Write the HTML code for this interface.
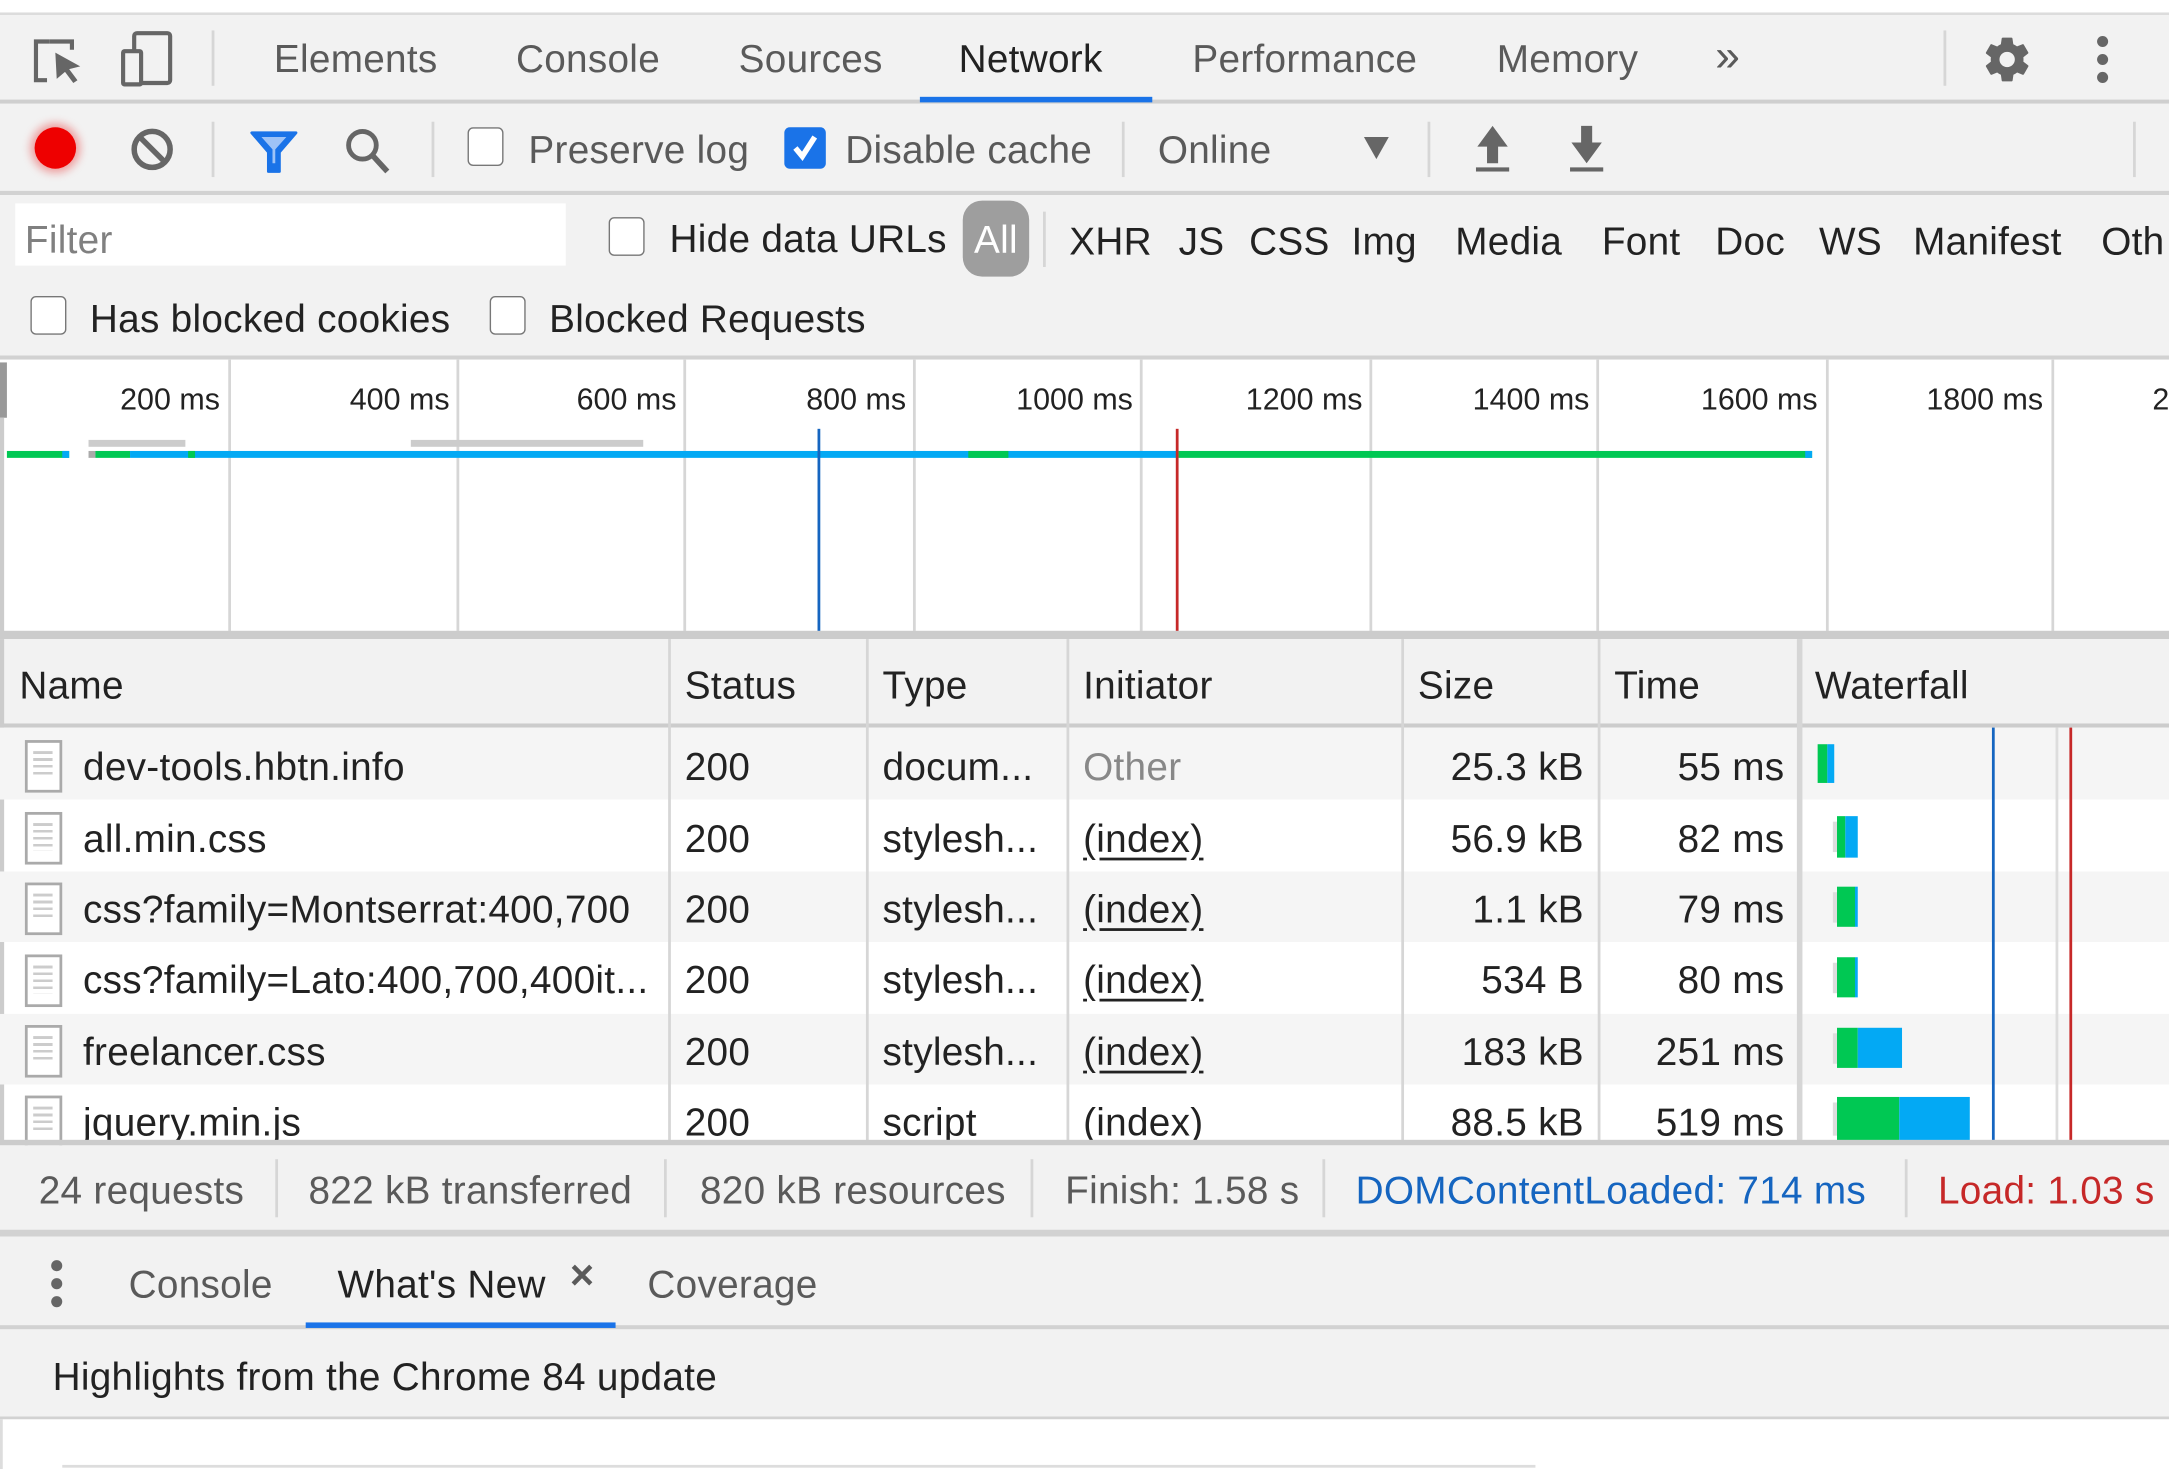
<!DOCTYPE html>
<html><head><meta charset="utf-8"><style>
html,body{margin:0;padding:0;width:2169px;height:1469px;overflow:hidden;background:#fff}
#w{position:absolute;left:0;top:0;width:1568px;height:1062px;transform:scale(1.38329);transform-origin:0 0;font-family:"Liberation Sans",sans-serif;font-size:28px;letter-spacing:0.2px;color:#222}
.a{position:absolute;white-space:nowrap}
.g{color:#5a5a5a}
.r{position:absolute;left:0;width:1568px}
.cb{position:absolute;width:26px;height:28px;border:1.5px solid #777;border-radius:4px;background:#fff;box-sizing:border-box}
.vl{position:absolute;width:2px;background:#d6d6d6}
.doc{position:absolute;left:18px;width:27px;height:38px;border:2px solid #aaa;box-sizing:border-box;background:#fff}
.doc:after{content:"";position:absolute;left:4px;top:6px;width:14px;height:20px;background:repeating-linear-gradient(#ccc 0 2px,transparent 2px 5px)}
.u{text-decoration:underline;text-underline-offset:4px}
</style></head><body><div id="w">
<div class="r" style="top:0;height:9px;background:#fff"></div>
<div class="r" style="top:9px;height:2px;background:#dcdcdc"></div>
<div class="r" style="top:11px;height:62px;background:#f2f2f2"></div>
<div class="r" style="top:72px;height:3px;background:#cfcfcf"></div>
<svg class="a" style="left:22px;top:26px" width="40" height="36" viewBox="0 0 40 36"><path d="M14 4H4V32H12" fill="none" stroke="#666" stroke-width="3"/><path d="M14 4H30V10" fill="none" stroke="#666" stroke-width="3"/><path d="M18 12L36 22L28 24L34 32L31 34L25 26L19 31Z" fill="#666"/></svg>
<svg class="a" style="left:86px;top:21px" width="42" height="44" viewBox="0 0 42 44"><rect x="11" y="3" width="26" height="36" rx="2" fill="none" stroke="#666" stroke-width="3"/><rect x="3" y="16" width="13" height="24" rx="1" fill="#f2f2f2" stroke="#666" stroke-width="3"/></svg>
<div class="vl" style="left:153px;top:22px;height:40px"></div>
<div class="a g" style="left:198px;top:27px">Elements</div>
<div class="a g" style="left:373px;top:27px">Console</div>
<div class="a g" style="left:534px;top:27px">Sources</div>
<div class="a" style="left:693px;top:27px;color:#222">Network</div>
<div class="a" style="left:665px;top:70px;width:168px;height:4px;background:#1a73e8"></div>
<div class="a g" style="left:862px;top:27px">Performance</div>
<div class="a g" style="left:1082px;top:27px">Memory</div>
<div class="a g" style="left:1240px;top:22px;font-size:32px">»</div>
<div class="vl" style="left:1405px;top:22px;height:40px"></div>
<svg class="a" style="left:1432px;top:24px" width="38" height="38" viewBox="0 0 24 24"><path fill="#666" d="M19.4 13c.04-.33.06-.66.06-1s-.02-.67-.06-1l2.1-1.65c.2-.15.24-.42.12-.64l-2-3.460c-.12-.22-.39-.3-.61-.22l-2.5 1c-.52-.4-1.080-.73-1.7-.98l-.38-2.65A.49.49 0 0 0 14 2h-4c-.25 0-.46.18-.49.42l-.38 2.65c-.61.25-1.17.59-1.69.98l-2.49-1c-.23-.09-.49 0-.61.22l-2 3.46c-.13.22-.07.49.12.64L4.57 11c-.04.33-.07.67-.07 1s.03.67.07 1l-2.11 1.65c-.19.15-.24.42-.12.64l2 3.46c.12.22.39.3.61.22l2.49-1c.52.4 1.08.73 1.69.98l.38 2.65c.03.24.24.42.49.42h4c.25 0 .46-.18.49-.42l.38-2.650c.61-.25 1.17-.59 1.69-.98l2.49 1c.23.09.49 0 .61-.22l2-3.46c.12-.22.07-.49-.12-.64L19.4 13zM12 15.5A3.5 3.5 0 1 1 12 8.5a3.5 3.5 0 0 1 0 7z"/></svg>
<svg class="a" style="left:1512px;top:24px" width="16" height="38"><circle cx="8" cy="6" r="4" fill="#666"/><circle cx="8" cy="19" r="4" fill="#666"/><circle cx="8" cy="32" r="4" fill="#666"/></svg>
<div class="r" style="top:75px;height:64px;background:#f2f2f2"></div>
<div class="r" style="top:138px;height:3px;background:#d2d2d2"></div>
<div class="a" style="left:25px;top:92px;width:30px;height:30px;border-radius:50%;background:#e00;box-shadow:0 0 6px 3px rgba(230,0,0,.35)"></div>
<svg class="a" style="left:93px;top:91px" width="34" height="34" viewBox="0 0 34 34"><circle cx="17" cy="17" r="13" fill="none" stroke="#666" stroke-width="4"/><path d="M8 8L26 26" stroke="#666" stroke-width="4"/></svg>
<div class="vl" style="left:153px;top:88px;height:40px"></div>
<svg class="a" style="left:180px;top:94px" width="36" height="32" viewBox="0 0 36 32"><path d="M2 2H34L22 16V30H14V16Z" fill="#1a73e8" stroke="#1a73e8" stroke-width="2" stroke-linejoin="round"/><path d="M9 5H27L19 14V24H17V14Z" fill="#9ec3f7"/></svg>
<svg class="a" style="left:248px;top:91px" width="36" height="36" viewBox="0 0 36 36"><circle cx="14" cy="14" r="10" fill="none" stroke="#666" stroke-width="3.5"/><path d="M21 21L32 33" stroke="#666" stroke-width="4"/></svg>
<div class="vl" style="left:312px;top:88px;height:40px"></div>
<div class="cb" style="left:338px;top:92px"></div>
<div class="a g" style="left:382px;top:93px">Preserve log</div>
<div class="a" style="left:567px;top:92px;width:30px;height:30px;background:#1a73e8;border-radius:4px"><svg width="30" height="30"><path d="M8 15L13 21L22 7" fill="none" stroke="#fff" stroke-width="4"/></svg></div>
<div class="a g" style="left:611px;top:93px">Disable cache</div>
<div class="vl" style="left:811px;top:88px;height:40px"></div>
<div class="a g" style="left:837px;top:93px">Online</div>
<svg class="a" style="left:985px;top:98px" width="20" height="18"><path d="M1 1H19L10 17Z" fill="#666"/></svg>
<div class="vl" style="left:1032px;top:88px;height:40px"></div>
<svg class="a" style="left:1064px;top:90px" width="30" height="36"><path d="M15 1L26 16H19V28H11V16H4Z" fill="#666"/><rect x="3" y="31" width="24" height="3" fill="#666"/></svg>
<svg class="a" style="left:1132px;top:90px" width="30" height="36"><path d="M15 28L26 13H19V1H11V13H4Z" fill="#666"/><rect x="3" y="31" width="24" height="3" fill="#666"/></svg>
<div class="vl" style="left:1542px;top:88px;height:40px"></div>
<div class="r" style="top:141px;height:117px;background:#f2f2f2"></div>
<div class="r" style="top:257px;height:3px;background:#d2d2d2"></div>
<div class="a" style="left:11px;top:147px;width:398px;height:45px;background:#fff"></div>
<div class="a" style="left:18px;top:158px;color:#808080">Filter</div>
<div class="cb" style="left:440px;top:157px"></div>
<div class="a" style="left:484px;top:157px">Hide data URLs</div>
<div class="a" style="left:696px;top:145px;width:48px;height:55px;border-radius:14px;background:#9e9e9e;color:#fff;text-align:center;line-height:58px">All</div>
<div class="vl" style="left:754px;top:153px;height:40px"></div>
<div class="a" style="left:773px;top:159px">XHR</div>
<div class="a" style="left:852px;top:159px">JS</div>
<div class="a" style="left:903px;top:159px">CSS</div>
<div class="a" style="left:977px;top:159px">Img</div>
<div class="a" style="left:1052px;top:159px">Media</div>
<div class="a" style="left:1158px;top:159px">Font</div>
<div class="a" style="left:1240px;top:159px">Doc</div>
<div class="a" style="left:1315px;top:159px">WS</div>
<div class="a" style="left:1383px;top:159px">Manifest</div>
<div class="a" style="left:1519px;top:159px">Oth</div>
<div class="cb" style="left:22px;top:214px"></div>
<div class="a" style="left:65px;top:215px">Has blocked cookies</div>
<div class="cb" style="left:354px;top:214px"></div>
<div class="a" style="left:397px;top:215px">Blocked Requests</div>
<div class="r" style="top:260px;height:197px;background:#fff"></div>
<div class="a" style="left:0;top:262px;width:5px;height:40px;background:#999"></div>
<div class="a" style="left:0;top:302px;width:3px;height:155px;background:#ccc"></div>
<div class="vl" style="left:165px;top:260px;height:197px"></div>
<div class="vl" style="left:330px;top:260px;height:197px"></div>
<div class="vl" style="left:494px;top:260px;height:197px"></div>
<div class="vl" style="left:660px;top:260px;height:197px"></div>
<div class="vl" style="left:824px;top:260px;height:197px"></div>
<div class="vl" style="left:990px;top:260px;height:197px"></div>
<div class="vl" style="left:1154px;top:260px;height:197px"></div>
<div class="vl" style="left:1320px;top:260px;height:197px"></div>
<div class="vl" style="left:1483px;top:260px;height:197px"></div>
<div style="font-size:22px;letter-spacing:0">
<div class="a" style="right:1409px;top:276px">200 ms</div>
<div class="a" style="right:1243px;top:276px">400 ms</div>
<div class="a" style="right:1079px;top:276px">600 ms</div>
<div class="a" style="right:913px;top:276px">800 ms</div>
<div class="a" style="right:749px;top:276px">1000 ms</div>
<div class="a" style="right:583px;top:276px">1200 ms</div>
<div class="a" style="right:419px;top:276px">1400 ms</div>
<div class="a" style="right:254px;top:276px">1600 ms</div>
<div class="a" style="right:91px;top:276px">1800 ms</div>
<div class="a" style="left:1556px;top:276px">2</div>
</div>
<div class="a" style="left:64px;top:318px;width:70px;height:5px;background:#ccc"></div>
<div class="a" style="left:297px;top:318px;width:168px;height:5px;background:#ccc"></div>
<div class="a" style="left:5px;top:326px;width:45px;height:5px;background:#00c853"></div>
<div class="a" style="left:45px;top:326px;width:5px;height:5px;background:#03a9f4"></div>
<div class="a" style="left:64px;top:326px;width:5px;height:5px;background:#aaa"></div>
<div class="a" style="left:69px;top:326px;width:25px;height:5px;background:#00c853"></div>
<div class="a" style="left:94px;top:326px;width:758px;height:5px;background:#03a9f4"></div>
<div class="a" style="left:136px;top:326px;width:5px;height:5px;background:#00c853"></div>
<div class="a" style="left:700px;top:326px;width:29px;height:5px;background:#00c853"></div>
<div class="a" style="left:852px;top:326px;width:458px;height:5px;background:#00c853"></div>
<div class="a" style="left:1305px;top:326px;width:5px;height:5px;background:#03a9f4"></div>
<div class="a" style="left:591px;top:310px;width:2px;height:147px;background:#1565c0"></div>
<div class="a" style="left:850px;top:310px;width:2px;height:147px;background:#c62828"></div>
<div class="r" style="top:456px;height:6px;background:#ccc"></div>
<div class="r" style="top:462px;height:62px;background:#f2f2f2"></div>
<div class="r" style="top:523px;height:3px;background:#ccc"></div>
<div class="a" style="left:0;top:462px;width:3px;height:363px;background:#ccc"></div>
<div class="a" style="left:14px;top:480px">Name</div>
<div class="a" style="left:495px;top:480px">Status</div>
<div class="a" style="left:638px;top:480px">Type</div>
<div class="a" style="left:783px;top:480px">Initiator</div>
<div class="a" style="left:1025px;top:480px">Size</div>
<div class="a" style="left:1167px;top:480px">Time</div>
<div class="a" style="left:1312px;top:480px">Waterfall</div>
<div class="r" style="top:526px;height:52px;background:#f5f5f5"></div>
<div class="r" style="top:630px;height:51px;background:#f5f5f5"></div>
<div class="r" style="top:733px;height:51px;background:#f5f5f5"></div>
<div class="vl" style="left:483px;top:462px;height:363px"></div>
<div class="vl" style="left:626px;top:462px;height:363px"></div>
<div class="vl" style="left:771px;top:462px;height:363px"></div>
<div class="vl" style="left:1013px;top:462px;height:363px"></div>
<div class="vl" style="left:1155px;top:462px;height:363px"></div>
<div class="a" style="left:1299px;top:462px;width:4px;height:363px;background:#d6d6d6"></div>
<div class="doc" style="top:535px"></div><div class="doc" style="top:587px"></div><div class="doc" style="top:638px"></div><div class="doc" style="top:690px"></div><div class="doc" style="top:741px"></div><div class="doc" style="top:792px"></div>
<div class="a" style="left:60px;top:539px">dev-tools.hbtn.info</div>
<div class="a" style="left:60px;top:591px">all.min.css</div>
<div class="a" style="left:60px;top:642px">css?family=Montserrat:400,700</div>
<div class="a" style="left:60px;top:693px">css?family=Lato:400,700,400it...</div>
<div class="a" style="left:60px;top:745px">freelancer.css</div>
<div class="a" style="left:60px;top:796px">jquery.min.js</div>
<div class="a" style="left:495px;top:539px">200</div><div class="a" style="left:495px;top:591px">200</div><div class="a" style="left:495px;top:642px">200</div><div class="a" style="left:495px;top:693px">200</div><div class="a" style="left:495px;top:745px">200</div><div class="a" style="left:495px;top:796px">200</div>
<div class="a" style="left:638px;top:539px">docum...</div><div class="a" style="left:638px;top:591px">stylesh...</div><div class="a" style="left:638px;top:642px">stylesh...</div><div class="a" style="left:638px;top:693px">stylesh...</div><div class="a" style="left:638px;top:745px">stylesh...</div><div class="a" style="left:638px;top:796px">script</div>
<div class="a" style="left:783px;top:539px;color:#888">Other</div><div class="a u" style="left:783px;top:591px">(index)</div><div class="a u" style="left:783px;top:642px">(index)</div><div class="a u" style="left:783px;top:693px">(index)</div><div class="a u" style="left:783px;top:745px">(index)</div><div class="a u" style="left:783px;top:796px">(index)</div>
<div class="a" style="right:423px;top:539px">25.3 kB</div><div class="a" style="right:423px;top:591px">56.9 kB</div><div class="a" style="right:423px;top:642px">1.1 kB</div><div class="a" style="right:423px;top:693px">534 B</div><div class="a" style="right:423px;top:745px">183 kB</div><div class="a" style="right:423px;top:796px">88.5 kB</div>
<div class="a" style="right:278px;top:539px">55 ms</div><div class="a" style="right:278px;top:591px">82 ms</div><div class="a" style="right:278px;top:642px">79 ms</div><div class="a" style="right:278px;top:693px">80 ms</div><div class="a" style="right:278px;top:745px">251 ms</div><div class="a" style="right:278px;top:796px">519 ms</div>
<div class="a" style="left:1314px;top:538px;width:7px;height:28px;background:#00c853"></div><div class="a" style="left:1321px;top:538px;width:5px;height:28px;background:#03a9f4"></div>
<div class="a" style="left:1325px;top:594px;width:3px;height:22px;background:#ddd"></div><div class="a" style="left:1328px;top:590px;width:6px;height:30px;background:#00c853"></div><div class="a" style="left:1334px;top:590px;width:9px;height:30px;background:#03a9f4"></div>
<div class="a" style="left:1325px;top:645px;width:3px;height:22px;background:#ddd"></div><div class="a" style="left:1328px;top:641px;width:13px;height:29px;background:#00c853"></div><div class="a" style="left:1341px;top:641px;width:2px;height:29px;background:#03a9f4"></div>
<div class="a" style="left:1325px;top:696px;width:3px;height:22px;background:#ddd"></div><div class="a" style="left:1328px;top:692px;width:13px;height:29px;background:#00c853"></div><div class="a" style="left:1341px;top:692px;width:2px;height:29px;background:#03a9f4"></div>
<div class="a" style="left:1325px;top:747px;width:3px;height:22px;background:#ddd"></div><div class="a" style="left:1328px;top:743px;width:15px;height:29px;background:#00c853"></div><div class="a" style="left:1343px;top:743px;width:32px;height:29px;background:#03a9f4"></div>
<div class="a" style="left:1325px;top:797px;width:3px;height:24px;background:#ddd"></div><div class="a" style="left:1328px;top:793px;width:45px;height:32px;background:#00c853"></div><div class="a" style="left:1373px;top:793px;width:51px;height:32px;background:#03a9f4"></div>
<div class="a" style="left:1440px;top:526px;width:2px;height:299px;background:#1565c0"></div>
<div class="a" style="left:1486px;top:526px;width:2px;height:299px;background:#ddd"></div>
<div class="a" style="left:1496px;top:526px;width:2px;height:299px;background:#c62828"></div>
<div class="r" style="top:824px;height:4px;background:#ccc"></div>
<div class="r" style="top:828px;height:62px;background:#f2f2f2"></div>
<div class="r" style="top:889px;height:5px;background:#d2d2d2"></div>
<div class="a g" style="left:28px;top:845px">24 requests</div>
<div class="vl" style="left:199px;top:838px;height:42px"></div>
<div class="a g" style="left:223px;top:845px">822 kB transferred</div>
<div class="vl" style="left:480px;top:838px;height:42px"></div>
<div class="a g" style="left:506px;top:845px">820 kB resources</div>
<div class="vl" style="left:745px;top:838px;height:42px"></div>
<div class="a g" style="left:770px;top:845px">Finish: 1.58 s</div>
<div class="vl" style="left:956px;top:838px;height:42px"></div>
<div class="a" style="left:980px;top:845px;color:#1565c0">DOMContentLoaded: 714 ms</div>
<div class="vl" style="left:1377px;top:838px;height:42px"></div>
<div class="a" style="left:1401px;top:845px;color:#c62828">Load: 1.03 s</div>
<div class="r" style="top:894px;height:65px;background:#f2f2f2"></div>
<div class="r" style="top:958px;height:3px;background:#d2d2d2"></div>
<svg class="a" style="left:33px;top:910px" width="16" height="36"><circle cx="8" cy="5" r="4" fill="#666"/><circle cx="8" cy="18" r="4" fill="#666"/><circle cx="8" cy="31" r="4" fill="#666"/></svg>
<div class="a g" style="left:93px;top:913px">Console</div>
<div class="a" style="left:244px;top:913px">What's New</div>
<div class="a g" style="left:412px;top:906px;font-size:30px;font-weight:bold">×</div>
<div class="a" style="left:221px;top:956px;width:224px;height:4px;background:#1a73e8"></div>
<div class="a g" style="left:468px;top:913px">Coverage</div>
<div class="r" style="top:961px;height:63px;background:#f2f2f2"></div>
<div class="r" style="top:1024px;height:2px;background:#d2d2d2"></div>
<div class="a" style="left:38px;top:980px">Highlights from the Chrome 84 update</div>
<div class="a" style="left:0;top:1026px;width:2px;height:36px;background:#ddd"></div>
<div class="a" style="left:45px;top:1059px;width:1065px;height:2px;background:#ddd"></div>
</div></body></html>
